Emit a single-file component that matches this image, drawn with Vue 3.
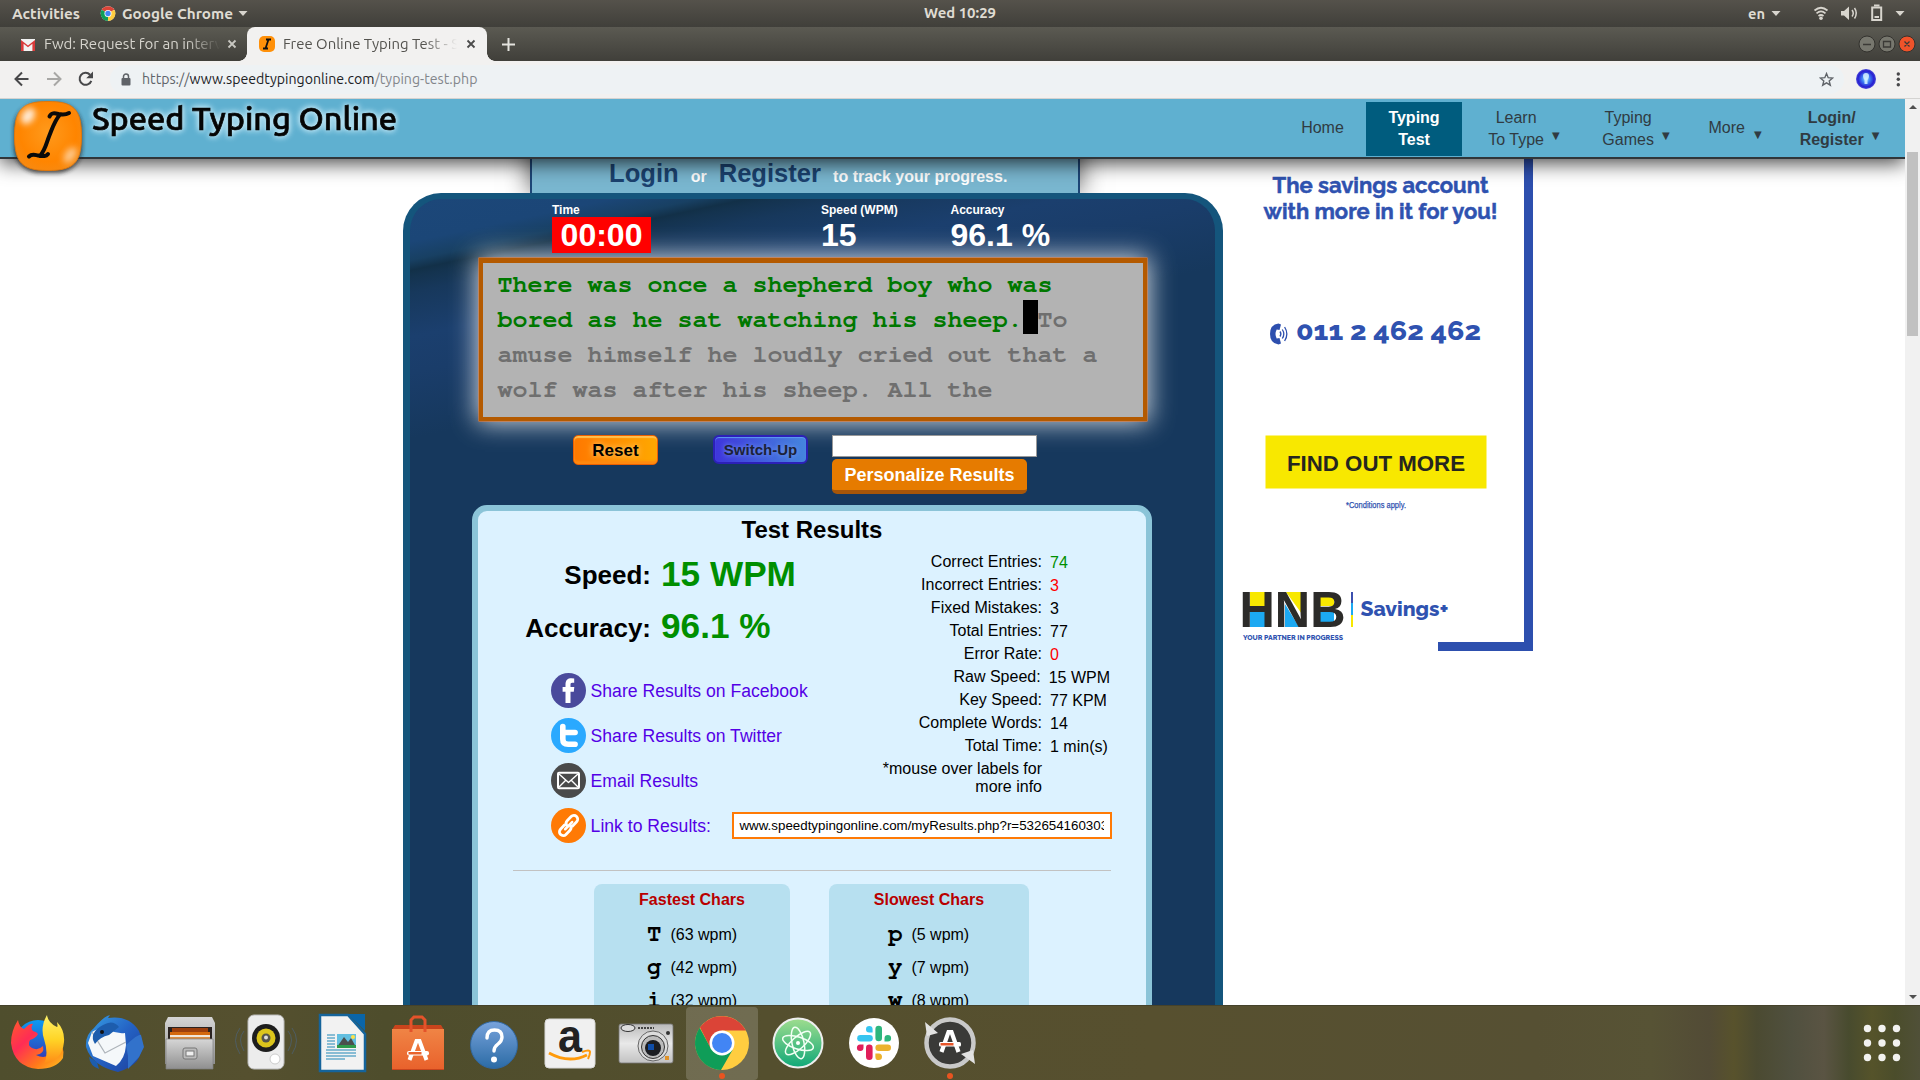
<script setup>
const stats = [
  { label: 'Correct Entries:', value: '74', tone: 'good' },
  { label: 'Incorrect Entries:', value: '3', tone: 'bad' },
  { label: 'Fixed Mistakes:', value: '3' },
  { label: 'Total Entries:', value: '77' },
  { label: 'Error Rate:', value: '0', tone: 'bad' },
  { label: 'Raw Speed:', value: '15 WPM' },
  { label: 'Key Speed:', value: '77 KPM' },
  { label: 'Complete Words:', value: '14' },
  { label: 'Total Time:', value: '1 min(s)' },
]
const fastest = [['T', '(63 wpm)'], ['g', '(42 wpm)'], ['i', '(32 wpm)']]
const slowest = [['p', '(5 wpm)'], ['y', '(7 wpm)'], ['w', '(8 wpm)']]
const resultUrl = 'www.speedtypingonline.com/myResults.php?r=53265416030335'
</script>

<template>
  <div class="screen">
    <!-- desktop bar -->
    <div class="topbar">
      <svg width="260" height="27" class="ui">
        <text x="12" y="18.500" font-weight="600" textLength="68" lengthAdjust="spacingAndGlyphs">Activities</text>
        <g transform="translate(108 13.500) scale(.27)">
          <circle r="27" fill="#fff" />
          <path d="M0 0 L-23.400-13.500 A27 27 0 0 1 23.400-13.500 Z" fill="#db4437" />
          <path d="M0 0 L-23.400-13.500 A27 27 0 0 0 0 27 Z" fill="#0f9d58" />
          <path d="M0 0 L23.400-13.500 A27 27 0 0 1 0 27 Z" fill="#ffcd40" />
          <circle r="13" fill="#fff" /><circle r="10" fill="#4285f4" />
        </g>
        <text x="122" y="18.500" font-weight="600" textLength="111" lengthAdjust="spacingAndGlyphs">Google Chrome</text>
        <path d="M238.500 11h9l-4.500 5z" fill="#d8d5ce" />
      </svg>
      <svg width="80" height="27" class="ui">
        <text x="4" y="18" font-weight="600" textLength="72" lengthAdjust="spacingAndGlyphs">Wed 10:29</text>
      </svg>
      <svg width="260" height="27" class="ui" viewBox="1660 0 260 27">
        <text x="1748" y="18.500" font-weight="600" textLength="17" lengthAdjust="spacingAndGlyphs">en</text>
        <path d="M1771.500 11h9l-4.500 5z M1895.500 11h9l-4.500 5z" fill="#d8d5ce" />
        <g fill="none" stroke="#d8d5ce" stroke-width="1.700">
          <path d="M1814.500 10.500q6.500-5.500 13 0M1816.500 13.300q4.500-3.800 9 0M1818.500 16q2.500-2 5 0" />
          <path d="M1852 10q2.500 3.200 0 6.500M1854.500 8q3.500 5 0 10.500" stroke-width="1.500" />
          <path d="M1872.200 7.500h9v12.500h-9z" stroke-width="2" />
        </g>
        <circle cx="1821" cy="18.300" r="1.800" fill="#d8d5ce" />
        <path d="M1841 11h3l5-4.500v13.500l-5-4.500h-3z M1874 4.500h5.500v2h-5.500z M1874.500 16h4.500v2h-4.500z" fill="#d8d5ce" />
      </svg>
    </div>

    <!-- browser tabs -->
    <div class="tabs">
      <div class="tab">
        <svg class="fav" width="14" height="12" viewBox="0 0 14 12">
          <path d="M0 0h14v12H0z" fill="#f2f2f2" />
          <path d="M0 12V1l7 5.500L14 1v11h-2.600V4.800L7 8.300 2.600 4.800V12z" fill="#d93a3a" />
        </svg>
        <svg width="178" height="34" class="ui tabtext fade">
          <text x="0" y="22" textLength="178" lengthAdjust="spacingAndGlyphs">Fwd: Request for an interv</text>
        </svg>
        <svg width="10" height="10" class="close"><path d="M1.500 1.500l7 7M8.500 1.500l-7 7" stroke="#c9c8c2" stroke-width="1.800" /></svg>
      </div>
      <div class="tab active">
        <svg width="16" height="16" viewBox="0 0 16 16">
          <rect width="16" height="16" rx="5" fill="#ff9009" />
          <path d="M7 3.500h5M4 12.500h5M9.500 3.500l-3 9" stroke="#111" stroke-width="1.800" fill="none" />
        </svg>
        <svg width="176" height="34" class="ui tabtext fade">
          <text x="0" y="22" textLength="176" lengthAdjust="spacingAndGlyphs">Free Online Typing Test - S</text>
        </svg>
        <svg width="10" height="10" class="close"><path d="M1.500 1.500l7 7M8.500 1.500l-7 7" stroke="#4b4b4b" stroke-width="1.800" /></svg>
      </div>
      <svg class="plus" width="13" height="13"><path d="M6.500 0v13M0 6.500h13" stroke="#e4e3de" stroke-width="2" /></svg>
      <svg class="winctl" width="60" height="20" viewBox="1857 34 60 20">
        <g stroke="#33322e"><circle cx="1867" cy="44" r="8" fill="#77776e" /><circle cx="1887" cy="44" r="8" fill="#77776e" /><circle cx="1907" cy="44" r="8" fill="#f0532a" /></g>
        <path d="M1863 44.500h8M1883.500 41.500h7v5.500h-7zM1904.500 41.500l5 5M1909.500 41.500l-5 5" stroke="#3b3a36" stroke-width="1.300" fill="none" />
      </svg>
    </div>

    <!-- address bar -->
    <div class="toolbar">
      <svg class="nav-ic" width="94" height="37" viewBox="0 61 94 37" fill="none" stroke-width="2">
        <path d="M28.500 79H16M22 72.500l-6.500 6.500L22 85.500" stroke="#48484a" />
        <path d="M47 79h13M54 72.500l6.500 6.500L54 85.500" stroke="#a8a7a5" />
        <path d="M91.300 80.800A6 6 0 1 1 90 74.700" stroke="#48484a" /><path d="M93 71.500v6.800h-6.800z" fill="#48484a" />
      </svg>
      <div class="omnibox">
        <svg width="10" height="13" viewBox="0 0 10 13"><rect x=".5" y="5" width="9" height="7.500" rx="1" fill="#5f6368" /><path d="M2.500 5.500V3.500a2.500 2.500 0 0 1 5 0v2" fill="none" stroke="#5f6368" stroke-width="1.500" /></svg>
        <svg width="345" height="29" class="ui url">
          <text x="0" y="19" textLength="335.500" lengthAdjust="spacingAndGlyphs"><tspan fill="#60646a">https://</tspan><tspan fill="#202124">www.speedtypingonline.com</tspan><tspan fill="#83868b">/typing-test.php</tspan></text>
        </svg>
        <svg class="star" width="15" height="15" viewBox="0 0 24 24"><path d="M12 2.500l2.700 6.600 7.100.5-5.500 4.600 1.800 6.900-6.100-3.800-6.100 3.800 1.800-6.900-5.500-4.600 7.100-.5z" fill="none" stroke="#5f6368" stroke-width="2.200" /></svg>
      </div>
      <svg class="ext" width="60" height="37" viewBox="1850 61 60 37">
        <defs><radialGradient id="bulb"><stop offset="0" stop-color="#9de6ff" /><stop offset=".4" stop-color="#3d7df5" /><stop offset=".8" stop-color="#281ed0" /><stop offset="1" stop-color="#4b4bd8" /></radialGradient></defs>
        <circle cx="1866" cy="79" r="10" fill="url(#bulb)" />
        <path d="M1863 76a3 3 0 0 1 6 0q0 2-1.500 4v4h-3v-4q-1.500-2-1.500-4z" fill="#d8f3ff" opacity=".85" />
        <g fill="#48484a"><circle cx="1898.300" cy="74" r="1.700" /><circle cx="1898.300" cy="79.300" r="1.700" /><circle cx="1898.300" cy="84.700" r="1.700" /></g>
      </svg>
    </div>

    <!-- web page -->
    <div class="viewport">
      <div class="page">
        <header class="site-head">
          <svg class="logo" width="400" height="84" viewBox="0 99 400 84">
            <defs>
              <radialGradient id="lg" cx=".5" cy=".45" r=".6"><stop offset="0" stop-color="#ff9a1c" /><stop offset=".7" stop-color="#ff8500" /><stop offset="1" stop-color="#f78a12" /></radialGradient>
              <filter id="bl" x="-50%" y="-50%" width="200%" height="200%"><feGaussianBlur stdDeviation="3" /></filter>
              <filter id="sh" x="-20%" y="-20%" width="140%" height="150%"><feGaussianBlur stdDeviation="2" /></filter>
            </defs>
            <rect x="14" y="103" width="68" height="70" rx="25" fill="#222" opacity=".8" filter="url(#sh)" />
            <path d="M48 101.500c25 0 33.500 7 33.500 34.500s-8.500 34.500-33.500 34.500S14.500 163.500 14.500 136 23 101.500 48 101.500z" fill="url(#lg)" stroke="#e0780c" stroke-width="1" />
            <ellipse cx="28" cy="116" rx="6" ry="9" transform="rotate(35 28 116)" fill="#fff" opacity=".85" filter="url(#bl)" />
            <ellipse cx="70" cy="155" rx="5" ry="9" transform="rotate(35 70 155)" fill="#ffe6c8" opacity=".7" filter="url(#bl)" />
            <path d="M49.500 116.500c2-4 5-3.500 9-2.500 5 1 7 1 10.500-1M29 156.500c3-3 6-1.500 9-1 6 1 8 1 10-1.500M60 114.500c-6 7-8 15-11 22-3 8-4 14-9 19.500" fill="none" stroke="#0a0a0a" stroke-width="4" stroke-linecap="round" />
            <text x="92" y="130" textLength="305" lengthAdjust="spacingAndGlyphs" class="brand">Speed Typing Online</text>
          </svg>
          <nav class="menu">
            <a class="mi home">Home</a>
            <a class="mi on">Typing<br />Test</a>
            <a class="mi learn"><span>Learn<br />To Type</span><i>▼</i></a>
            <a class="mi games"><span>Typing<br />Games</span><i>▼</i></a>
            <a class="mi more"><span>More</span><i>▼</i></a>
            <a class="mi login"><span>Login/<br />Register</span><i>▼</i></a>
          </nav>
        </header>

        <div class="content">
          <main class="main">
            <div class="login-tab"><b>Login</b><span>or</span><b>Register</b><span>to track your progress.</span></div>
            <section class="panel">
              <div class="meters">
                <div class="meter time"><label>Time</label><strong>00:00</strong></div>
                <div class="meter wpm"><label>Speed (WPM)</label><strong>15</strong></div>
                <div class="meter"><label>Accuracy</label><strong>96.1 %</strong></div>
              </div>
              <div class="typing">
                <div class="done">There was once a shepherd boy who was</div>
                <div><span class="done">bored as he sat watching his sheep.</span><span class="caret">&nbsp;</span>To</div>
                <div>amuse himself he loudly cried out that a</div>
                <div>wolf was after his sheep. All the</div>
              </div>
              <div class="controls">
                <button class="reset">Reset</button>
                <button class="switch">Switch-Up</button>
                <div class="personal"><input type="text" /><button>Personalize Results</button></div>
              </div>

              <div class="results">
                <h2>Test Results</h2>
                <div class="cols">
                  <div class="left">
                    <div class="score"><span>Speed:</span><b>15 WPM</b></div>
                    <div class="score second"><span>Accuracy:</span><b>96.1 %</b></div>
                    <div class="share first">
                      <svg width="35" height="35" viewBox="0 0 35 35"><circle cx="17.500" cy="17.500" r="17.500" fill="#4a4a9c" /><path d="M14.500 30V18.700H11.600V14h2.900v-2.500c0-4.300 2.200-6.200 6-6.200l2.700.2v4.300h-2c-1.500 0-1.700.8-1.700 1.900V14h3.800l-.5 4.700h-3.300V30z" fill="#fff" /></svg>
                      <a>Share Results on Facebook</a>
                    </div>
                    <div class="share">
                      <svg width="35" height="35" viewBox="0 0 35 35"><circle cx="17.500" cy="17.500" r="17.500" fill="#2aa9ff" /><path d="M11.800 8.500V21q0 5.300 5.300 5.300h7M11.800 14.500h12.300" fill="none" stroke="#fff" stroke-width="5.600" stroke-linecap="round" stroke-linejoin="round" /></svg>
                      <a>Share Results on Twitter</a>
                    </div>
                    <div class="share">
                      <svg width="35" height="35" viewBox="0 0 35 35"><circle cx="17.500" cy="17.500" r="17.500" fill="#4a4a4a" /><g fill="none" stroke="#fff" stroke-width="1.700" stroke-linejoin="round"><rect x="7" y="9.700" width="21" height="15.500" rx="1" stroke-width="2" /><path d="M8 11l9.500 8.500L27 11M8 24l7-7M27 24l-7-7" stroke-width="1.400" /></g></svg>
                      <a>Email Results</a>
                    </div>
                  </div>
                  <div class="table">
                    <div v-for="s in stats" :key="s.label" class="row"><span>{{ s.label }}</span><em :class="s.tone">{{ s.value }}</em></div>
                    <p>*mouse over labels for<br />more info</p>
                  </div>
                </div>
                <div class="share link">
                  <svg width="35" height="35" viewBox="0 0 35 35"><circle cx="17.500" cy="17.500" r="17.500" fill="#ff7a05" /><g fill="none" stroke="#fff" stroke-width="2.800" transform="rotate(-46 17.500 17.500)"><path d="M15 14.300H9.300a3.800 3.800 0 0 0 0 7.600h5.800a3.800 3.800 0 0 0 3.600-2.800M20 20.800h5.800a3.800 3.800 0 0 0 0-7.600H20a3.800 3.800 0 0 0-3.600 2.800" stroke-linecap="round" /><path d="M12.500 17.700h10" stroke-width="2.600" stroke-linecap="round" /></g></svg>
                  <a>Link to Results:</a>
                  <div class="url-field"><div>{{ resultUrl }}</div></div>
                </div>
                <hr />
                <div class="chars">
                  <div class="box fast">
                    <h3>Fastest Chars</h3>
                    <div v-for="c in fastest" :key="c[0]" class="ch"><b>{{ c[0] }}</b><span>{{ c[1] }}</span></div>
                  </div>
                  <div class="box slow">
                    <h3>Slowest Chars</h3>
                    <div v-for="c in slowest" :key="c[0]" class="ch"><b>{{ c[0] }}</b><span>{{ c[1] }}</span></div>
                  </div>
                </div>
              </div>
            </section>
          </main>

          <aside class="ad">
            <svg width="300" height="552" viewBox="1233 99 300 552">
              <path d="M1524 99h9v552h-95v-9h86z" fill="#2d4fae" />
              <g fill="#2f52b0" class="adfont">
                <text x="1272.500" y="193" font-size="22" font-weight="700" textLength="216" lengthAdjust="spacingAndGlyphs" stroke="#2f52b0" stroke-width=".5">The savings account</text>
                <text x="1263.500" y="219" font-size="22" font-weight="700" textLength="234" lengthAdjust="spacingAndGlyphs" stroke="#2f52b0" stroke-width=".5">with more in it for you!</text>
                <text x="1296" y="340" font-size="26.500" font-weight="800" textLength="185" lengthAdjust="spacingAndGlyphs">011 2 462 462</text>
                <text x="1360.500" y="616" font-size="19.500" font-weight="800" textLength="88" lengthAdjust="spacingAndGlyphs">Savings+</text>
                <text x="1243" y="640" font-size="6.800" font-weight="800" textLength="100" lengthAdjust="spacingAndGlyphs">YOUR PARTNER IN PROGRESS</text>
                <text x="1346" y="508" font-size="9" textLength="60" lengthAdjust="spacingAndGlyphs" class="cond" stroke="#2f52b0" stroke-width=".25">*Conditions apply.</text>
              </g>
              <path d="M1278.500 323.500q-8.500 1-8.500 10.500t8.500 10.500l2.500-1-1.500-5.500-2.800.5q-2.400-4.500 0-9l2.800.5 1.500-5.500z" fill="#2d4fae" />
              <path d="M1280 331.500q1.800 2.500 0 5M1282.300 329.500q3 4.500 0 9M1284.600 327q4.500 7 0 14" fill="none" stroke="#2d4fae" stroke-width="1.300" />
              <rect x="1265.500" y="435.500" width="221" height="53" fill="#f8e800" />
              <text x="1287" y="470.800" textLength="178" lengthAdjust="spacingAndGlyphs" class="cta">FIND OUT MORE</text>
              <g fill="#f8e800"><path d="M1250 592h16v14h-16zM1286 592h16v22zM1320 597h14v9h-14z" /></g>
              <g fill="#1ca9f2"><path d="M1250 612h16v15h-16zM1285 604l14 23h-14zM1320 612h14v10h-14z" /></g>
              <text x="1239.500" y="627" textLength="106" lengthAdjust="spacingAndGlyphs" class="hnb">HNB</text>
              <path d="M1351 592h2v11h-2z" fill="#3b4fae" /><path d="M1351 603h2v12h-2z" fill="#1ca9f2" /><path d="M1351 615h2v12h-2z" fill="#f8e800" />
            </svg>
          </aside>
        </div>
      </div>
      <div class="scrollbar"><i class="up"></i><div class="thumb"></div><i class="down"></i></div>
    </div>

    <!-- dock -->
    <div class="dock">
      <div class="app">
        <svg viewBox="-38 -38 76 76">
          <defs>
            <linearGradient id="ff" x1="0" y1="0" x2="1" y2="1"><stop offset="0" stop-color="#ff5a2b" /><stop offset=".35" stop-color="#ff2c55" /><stop offset=".7" stop-color="#ff7a1a" /><stop offset="1" stop-color="#ffc41f" /></linearGradient>
            <linearGradient id="ff2" x1="0" y1="0" x2="0" y2="1"><stop offset="0" stop-color="#fff36a" /><stop offset=".5" stop-color="#ffd426" /><stop offset="1" stop-color="#ff8a16" /></linearGradient>
            <linearGradient id="ffb" x1="0" y1="0" x2="0" y2="1"><stop offset="0" stop-color="#0a9bf5" /><stop offset="1" stop-color="#3a2aa8" /></linearGradient>
          </defs>
          <circle r="23" cy="0" fill="url(#ffb)" />
          <path d="M-20-23q1 7 6 9 6-6 9-5-3 4 0 7 4 1 5 3-2 4-8 6-3 5 2 8 6 3 11-2 2 8-7 9 10 5 16-3 6-8 2-17 12 12 9 23-7 11-25 11-24-2-27-26 0-12 7-23z" fill="url(#ff)" />
          <path d="M9-28q-7 12-3 24 5 15 0 25 18-3 20-22 1-12-7-20 1 5 0 5-9-4-10-12z" fill="url(#ff2)" />
        </svg>
      </div>
      <div class="app">
        <svg viewBox="-38 -38 76 76">
          <defs><linearGradient id="tb" x1="0" y1="0" x2="1" y2="1"><stop offset="0" stop-color="#38a2e6" /><stop offset=".5" stop-color="#2462c4" /><stop offset="1" stop-color="#1d3f9c" /></linearGradient></defs>
          <path d="M-20-15Q-10-27-4-28L-6-25Q15-28 25-12 32 4 23 18 17 25 4 29q-26-6-32-25-1-12 8-19z" fill="url(#tb)" />
          <path d="M-26 0l4-11q9-6 17-2 8 4 16 3l1 12q-1 14-10 21l-23-10z" fill="#f5f8fa" />
          <path d="M-22-11l13 21L12-1" fill="none" stroke="#aeb4ba" stroke-width="1.300" />
          <path d="M-25 14q1 9 10 12l-2-7zM-11-18q10-6 16 2l-10 8q-9 2-14 9-7-11 8-19z" fill="#1d5dad" />
          <circle cx="-12" cy="-11" r="2" fill="#111" />
          <path d="M12 2q13-12 15-10l3 12-5 10-11 12 0-13z" fill="#3272cb" />
        </svg>
      </div>
      <div class="app">
        <svg viewBox="-38 -38 76 76">
          <defs><linearGradient id="cab" x1="0" y1="0" x2="0" y2="1"><stop offset="0" stop-color="#d6d6d6" /><stop offset="1" stop-color="#8f8f8f" /></linearGradient></defs>
          <path d="M-22-26h44l3 6v41h-50v-41z" fill="url(#cab)" />
          <path d="M-22-16h44v14h-44z" fill="#2a2220" />
          <path d="M-18-15h36v4h-36z" fill="#9c3f0d" /><path d="M-20-11h40v4h-40z" fill="#d4690f" /><path d="M-20-8h40v5h-40z" fill="#f0e6da" /><path d="M-20-6h40v5h-40z" fill="#d88d45" />
          <path d="M-24-4h47v30h-47z" fill="url(#cab)" stroke="#7e7e7e" stroke-width=".7" />
          <rect x="-7" y="5" width="14" height="11" rx="2" fill="#bbb" stroke="#777" /><rect x="-4" y="8" width="8" height="5" fill="#eee" stroke="#777" />
        </svg>
      </div>
      <div class="app">
        <svg viewBox="-38 -38 76 76">
          <g fill="none" stroke="#4b6378" opacity=".7"><path d="M-22-12q-7 8 0 20M-26-15q-9 12 0 26M22-12q7 8 0 20M26-15q9 12 0 26" /></g>
          <rect x="-18" y="-28" width="36" height="54" rx="6" fill="#ececec" stroke="#bbb" />
          <ellipse cy="-5" rx="14" ry="14" fill="#1d1d1d" /><circle cy="-5" r="9.500" fill="#dcc51c" /><circle cy="-5" r="4.500" fill="#55544a" /><circle cy="-5.500" r="2" fill="#ddd" />
          <circle cx="9" cy="16" r="5" fill="#fff" stroke="#ccc" />
        </svg>
      </div>
      <div class="app">
        <svg viewBox="-38 -38 76 76">
          <path d="M-22-28h28l17 19v37h-45z" fill="#f2f2f2" stroke="#15649b" stroke-width="2.500" />
          <path d="M6-29h17v17z" fill="#0a65a8" />
          <path d="M-15-8h8M-15-5h8M-15-2h8M-15 1h8M-15 4h8M-16 7h30M-16 10h30M-16 13h30M-16 16h19" stroke="#1e86b5" stroke-width="1.200" />
          <path d="M-5-9h19V5H-5z" fill="#63bfe0" /><path d="M-5 4l7-10 4 5 3-4 5 9z" fill="#4a4f4c" /><path d="M-5 2h19v3H-5z" fill="#2e9a4a" /><circle cx="11" cy="-6" r="2" fill="#ffe047" />
        </svg>
      </div>
      <div class="app">
        <svg viewBox="-38 -38 76 76">
          <defs><linearGradient id="bag" x1="0" y1="0" x2="0" y2="1"><stop offset="0" stop-color="#f08445" /><stop offset="1" stop-color="#e9622c" /></linearGradient></defs>
          <path d="M-23-18h46l3 5v40h-52v-40z" fill="#c9441c" /><path d="M-26-14h52v40h-52z" fill="url(#bag)" />
          <path d="M-7-11v-12l3-3h8l3 3v12" fill="none" stroke="#e4532a" stroke-width="3" />
          <path d="M-8.500 17L-1.500-2h3L8.500 17" fill="none" stroke="#fff" stroke-width="4" />
          <rect x="-11" y="8" width="22" height="4.500" rx="2" fill="#fff" /><rect x="-9.500" y="9" width="13" height="2.500" fill="#e9622c" />
        </svg>
      </div>
      <div class="app">
        <svg viewBox="-38 -38 76 76">
          <defs><linearGradient id="hp" x1="0" y1="0" x2="0" y2="1"><stop offset="0" stop-color="#78a3dc" /><stop offset="1" stop-color="#2b6ba5" /></linearGradient></defs>
          <circle cy="2" r="23.500" fill="url(#hp)" stroke="#3268a0" />
          <path d="M-7-5q0-8 7.500-8t7.500 7q0 4-4 7-4 3-4 7" fill="none" stroke="#fff" stroke-width="3.400" stroke-linecap="round" /><circle cy="16.500" r="3" fill="#fff" />
        </svg>
      </div>
      <div class="app">
        <svg viewBox="-38 -38 76 76">
          <rect x="-25" y="-24" width="50" height="49" rx="4" fill="#f0f0f0" stroke="#d8d8d8" />
          <text x="-12" y="9" class="amz" textLength="24" lengthAdjust="spacingAndGlyphs">a</text>
          <path d="M-21 10q20 11 38 2" fill="none" stroke="#ff9a0a" stroke-width="3" /><path d="M12 9q8-3 8 0t-2 7" fill="none" stroke="#ff9a0a" stroke-width="2" />
        </svg>
      </div>
      <div class="app">
        <svg viewBox="-38 -38 76 76">
          <defs><linearGradient id="cam" x1="0" y1="0" x2="0" y2="1"><stop offset="0" stop-color="#b9b9b9" /><stop offset=".5" stop-color="#e9e9e9" /><stop offset="1" stop-color="#c2c2c2" /></linearGradient></defs>
          <rect x="-27" y="-19" width="54" height="39" rx="2" fill="url(#cam)" stroke="#777" stroke-width=".8" />
          <ellipse cx="-18" cy="-15" rx="7" ry="3.500" fill="#ddd" stroke="#333" /><path d="M-8-15h16" stroke="#444" stroke-width="2" stroke-dasharray="2 1" />
          <circle cx="7" cy="3" r="15" fill="#ddd" stroke="#666" /><circle cx="7" cy="4" r="11.500" fill="#bbb" stroke="#333" /><circle cx="7" cy="5" r="8" fill="#1b1d22" /><path d="M2 1h6v6H2z" fill="#0f4da8" />
          <circle cx="22" cy="-10" r="2" fill="#333" /><rect x="19" y="13" width="4" height="4" fill="#e0932b" />
        </svg>
      </div>
      <div class="app sel">
        <svg viewBox="-38 -38 76 76">
          <circle r="27" fill="#ffcd40" />
          <path d="M-22-15.600A27 27 0 0 1 23.800-12.500H0L-11 6z" fill="#db4437" />
          <path d="M-22.300-15.200A27 27 0 0 0-1 27L10.500 7-10.800 6.200z" fill="#0f9d58" />
          <circle r="12.500" fill="#fff" /><circle r="10" fill="#4285f4" />
        </svg>
        <i class="run"></i>
      </div>
      <div class="app">
        <svg viewBox="-38 -38 76 76">
          <defs><linearGradient id="at" x1="0" y1="0" x2="0" y2="1"><stop offset="0" stop-color="#9fdd8e" /><stop offset="1" stop-color="#10a878" /></linearGradient></defs>
          <circle r="24.500" fill="url(#at)" stroke="#eee" stroke-width="2" />
          <g fill="none" stroke="#f2fff4" stroke-width="1.500"><ellipse rx="16" ry="6" transform="rotate(18)" /><ellipse rx="16" ry="6" transform="rotate(78)" /><ellipse rx="16" ry="6" transform="rotate(-42)" /></g><circle r="2" fill="#fff" />
        </svg>
      </div>
      <div class="app">
        <svg viewBox="-38 -38 76 76">
          <circle r="25" fill="#fff" />
          <g stroke-width="6.600" stroke-linecap="round"><path d="M-13.500-4.800h9" stroke="#36c5f0" /><path d="M4.700-14v9" stroke="#2eb67d" /><path d="M4.700 4.700h9" stroke="#ecb22e" /><path d="M-4.700 4.700v9" stroke="#e01e5a" /></g>
          <g><path d="M-1.400-10.500h-3.400a3.300 3.300 0 1 1 3.400-3.400z" fill="#36c5f0" /><path d="M10.500-1.400v-3.400a3.300 3.300 0 1 1 3.400 3.400z" fill="#2eb67d" /><path d="M1.400 10.500h3.400a3.300 3.300 0 1 1-3.400 3.400z" fill="#ecb22e" /><path d="M-10.500 1.400v3.400a3.300 3.300 0 1 1-3.400-3.400z" fill="#e01e5a" /></g>
        </svg>
      </div>
      <div class="app">
        <svg viewBox="-38 -38 76 76">
          <circle r="22.500" fill="#3a3a38" /><circle r="23.500" fill="none" stroke="#c9c9c9" stroke-width="4.500" />
          <path d="M-25-21l2 14 11-3zM25 21l-2-14-12 4z" fill="#e2e2e2" />
          <path d="M-8.500 9L-1.500-11h3L8.500 9" fill="none" stroke="#fff" stroke-width="4.200" /><rect x="-11" y="-1" width="22" height="4.500" rx="1.500" fill="#fff" /><rect x="-9.500" y="0" width="13" height="2.500" fill="#e8562a" />
        </svg>
        <i class="run"></i>
      </div>
      <svg class="grid" width="40" height="40"><g fill="#f2f2f0"><template v-for="r in 3" :key="r"><circle v-for="c in 3" :key="c" :cx="c * 14.500 - 9" :cy="r * 14.500 - 9" r="3.700" /></template></g></svg>
    </div>
  </div>
</template>

<style>
html, body { margin: 0; background: #fff; overflow: hidden; }
</style>

<style scoped>
* { box-sizing: border-box; }
.screen { width: 1920px; height: 1080px; display: flex; flex-direction: column; overflow: hidden; font-family: "Liberation Sans", Arial, sans-serif; background: #fff; }
svg { display: block; flex: none; }
.ui { font-family: Ubuntu, "Noto Sans", sans-serif; font-size: 14px; fill: #dfdbd2; }

.topbar { height: 27px; flex: none; display: flex; justify-content: space-between; background: linear-gradient(#55524b, #403f3a); }
.tabs { height: 34px; flex: none; display: flex; align-items: center; background: linear-gradient(#5b5a52, #403f3a); }
.tab { width: 247px; height: 34px; display: flex; align-items: center; padding-left: 21px; }
.tab .fav { margin-right: 9px; margin-top: 1px; }
.tabtext { fill: #d6d4cd; font-size: 14.500px; }
.tab .close { margin-left: 5px; }
.tab.active { position: relative; width: 240px; padding-left: 12px; background: #f2f1f0; border-radius: 8px 8px 0 0; }
.tab.active::before, .tab.active::after { content: ""; position: absolute; bottom: 0; width: 8px; height: 8px; }
.tab.active::before { left: -8px; background: radial-gradient(circle at 0 0, transparent 7.500px, #f2f1f0 8px); }
.tab.active::after { right: -8px; background: radial-gradient(circle at 100% 0, transparent 7.500px, #f2f1f0 8px); }
.tab.active .tabtext { fill: #54534f; margin-left: 8px; }
.tab.active .close { margin-left: 7px; }
.fade { -webkit-mask-image: linear-gradient(90deg, #000 80%, transparent 99%); mask-image: linear-gradient(90deg, #000 80%, transparent 99%); }
.plus { margin-left: 15px; }
.winctl { margin-left: auto; margin-right: 3px; }

.toolbar { height: 38px; flex: none; display: flex; align-items: flex-start; background: #f2f1f0; border-bottom: 1px solid #d4d3d1; }
.omnibox { width: 1734px; height: 29px; margin: 4px 0 0 16px; border-radius: 15px; background: #eef2f4; display: flex; align-items: center; padding-left: 11px; }
.url { margin-left: 11px; font-size: 15px; }
.star { margin-left: auto; margin-right: 10px; }
.ext { margin-left: 6px; }

.viewport { height: 906px; flex: none; display: flex; overflow: hidden; }
.page { position: relative; width: 1905px; height: 906px; overflow: hidden; }
.site-head { position: absolute; z-index: 3; inset: 0 0 auto 0; height: 60px; display: flex; justify-content: space-between; background: #5fb0d0; border-bottom: 2px solid #30363a; box-shadow: 0 4px 20px rgba(0, 0, 0, .75); }
.brand { font-family: "Ubuntu", "Noto Sans", sans-serif; font-size: 31.500px; font-weight: 500; fill: #050505; stroke: #050505; stroke-width: .7; filter: drop-shadow(0 0 3px #cfeefa) drop-shadow(0 0 2px #a8daee); }
.menu { display: flex; align-items: flex-start; height: 58px; padding-right: 30px; font-size: 16px; line-height: 22px; color: #303b42; text-align: center; }
.mi { height: 54px; margin-top: 3px; display: flex; align-items: center; justify-content: center; }
.mi i { font: normal 10px/12px "DejaVu Sans", sans-serif; align-self: flex-end; margin-bottom: 14px; }
.mi.home { width: 43px; margin-right: 22px; margin-top: 2px; }
.mi.on { width: 96px; margin-right: 25px; background: #005c7e; color: #fff; font-weight: bold; }
.mi.learn { width: 74px; gap: 8px; margin-right: 41px; }
.mi.games { width: 68px; gap: 8px; margin-right: 38px; }
.mi.more { width: 54px; gap: 9px; margin-right: 37px; margin-top: 2px; }
.mi.more i { margin-bottom: 14px; }
.mi.login { width: 81px; gap: 8px; font-weight: bold; margin-right: -5px; }

.content { display: flex; align-items: flex-start; }
.main { width: 820px; margin-left: 403px; }
.login-tab { width: 550px; height: 94px; margin-left: 127px; padding: 60px 0 0 77px; border: 2px solid #1d4677; border-width: 0 2px; background: #79b6cf; box-shadow: 0 0 24px rgba(0, 0, 0, .65); display: flex; align-items: baseline; color: #fff; font-weight: bold; font-size: 16px; line-height: 28px; white-space: nowrap; }
.login-tab b { font-size: 25.600px; color: #1b426f; }
.login-tab span { margin: 0 12px; }
.panel { position: relative; height: 812px; border: solid #14557c; border-width: 6px 8px 0 7px; border-radius: 38px 38px 0 0; background: linear-gradient(168deg, #1c4779 0, #1b4677 42px, #184063 60px, #123048 70px, #14334f 76px, #17385c 92px, #1b3f6e 135px, #1a3d6a 170px, #16385d 235px); padding-top: 4px; }
.meters { display: flex; padding-left: 142px; color: #fff; font-weight: bold; }
.meter label { display: block; font-size: 12px; line-height: 15px; height: 14px; white-space: nowrap; }
.meter strong { display: block; font-size: 32px; line-height: 36px; white-space: nowrap; }
.meter.time { width: 269px; }
.meter.time strong { width: 99px; background: #f00; text-align: center; }
.meter.wpm { width: 129.500px; }
.typing { margin: 5px 0 0 69px; width: 668px; height: 163px; border: 4px solid #b45a00; border-top-width: 5px; padding: 4px 0 0 14.500px; background: #b3b3b3; box-shadow: 0 0 0 .5px #ff7a20, 0 0 24px 2px rgba(255, 255, 255, .8); color: #6f6f6f; font: bold 25px/35px "Courier 10 Pitch", "Nimbus Mono PS", "FreeMono", "Liberation Mono", monospace; white-space: pre; }
.typing .done { color: #007800; }
.caret { display: inline-block; width: 15px; height: 34px; vertical-align: top; margin-top: -2px; background: #000; }
.controls { display: flex; align-items: flex-start; padding: 14px 0 0 163px; height: 84px; }
button { padding: 0; border: 0; font-family: inherit; font-weight: bold; white-space: nowrap; }
.reset { width: 85px; height: 30px; border: 1px solid #ec5f00; border-radius: 5px; background: linear-gradient(90deg, #ff7800, #ffa800); box-shadow: inset 0 2px 1px #ffc050, inset 0 -3px 2px #ff8a10; font-size: 17px; line-height: 27px; color: #000; text-shadow: 0 0 6px #ffd98a; }
.switch { width: 95px; height: 29px; margin: 0 0 0 55px; border: 2px solid #2c20b8; border-radius: 6px; background: linear-gradient(90deg, #3f35dc, #4585dd); box-shadow: inset 0 1px 1px #5d9df0; font-size: 15px; color: #1c2238; text-shadow: 0 0 5px #7aa0f0; }
.personal { margin-left: 24px; display: flex; flex-direction: column; gap: 2px; align-items: flex-start; }
.personal input { width: 205px; height: 22px; border: 1px solid #999; background: #fff; padding: 0; }
.personal button { width: 195px; height: 35px; padding-top: 1px; border-radius: 5px; background: #e67b00; border-bottom: 4px solid #a75608; font-size: 18px; color: #fff; }

.results { margin-left: 62px; width: 680px; height: 520px; border: 6px solid #8bc4d8; border-radius: 15px 15px 0 0; background: #dcf2ff; padding-top: 4px; color: #000; }
h2 { margin: 0; font-size: 24px; line-height: 30px; text-align: center; }
.cols { display: flex; margin-top: 3px; height: 255px; }
.left { width: 370px; }
.score { display: flex; height: 52px; line-height: 52px; font-weight: bold; white-space: nowrap; }
.score span { width: 173px; text-align: right; font-size: 26px; padding-top: 1px; }
.score b { margin-left: 10px; font-size: 35.200px; color: #008f00; }
.score.second span { padding-top: 2px; }
.share { display: flex; align-items: center; height: 45px; padding-left: 73px; font-size: 17.600px; color: #5400e6; white-space: nowrap; }
.share.first { margin-top: 16px; }
.share a { margin-left: 4.600px; padding-top: 2px; }
.share.link a { width: 141.400px; }
.url-field { width: 380px; height: 27px; border: 2px solid #ff7a05; background: #fff; padding: 0 6px 0 5.500px; }
.url-field div { overflow: hidden; font-size: 13.333px; line-height: 23px; color: #000; }
.table { width: 262px; padding-top: 2px; font-size: 16px; }
.row { display: flex; height: 23px; line-height: 23px; white-space: nowrap; }
.row span { width: 194px; text-align: right; }
.row em { margin-left: 8px; font-style: normal; position: relative; top: 1px; }
.good { color: #008f00; }
.bad { color: #f00; }
.table p { margin: 3px 0 0; width: 194px; line-height: 18px; text-align: right; }
hr { width: 598px; height: 1px; margin: 22px 0 13px 35px; border: 0; background: #c2c2c2; }
.chars { display: flex; gap: 39px; padding-left: 116px; }
.box { height: 160px; border-radius: 8px 8px 0 0; background: #b7e0f0; }
.box.fast { width: 196px; }
.box.slow { width: 200px; }
h3 { margin: 0 0 3px; font-size: 16px; line-height: 31px; text-align: center; color: #b90000; }
.ch { display: flex; height: 33px; line-height: 33px; font-size: 16px; padding-left: 53px; gap: 9px; }
.slow .ch { padding-left: 59px; }
.ch b { font: bold 24px/32px "Courier 10 Pitch", "Nimbus Mono PS", "FreeMono", "Liberation Mono", monospace; }

.ad { margin-left: 10px; }
.adfont { font-family: Raleway, Lato, "Open Sans", sans-serif; }
.cond { font-family: "Liberation Sans", sans-serif; }
.cta { font: bold 22.500px "Liberation Sans", sans-serif; fill: #26261f; }
.hnb { font: bold 50.500px "Liberation Sans", sans-serif; fill: #2c2b29; }

.scrollbar { width: 15px; height: 906px; background: #f1f1f1; display: flex; flex-direction: column; align-items: center; }
.scrollbar i { width: 0; height: 0; border: 4px solid transparent; }
.up { border-top-width: 0 !important; border-bottom-color: #505050 !important; margin-top: 6px; }
.thumb { width: 11px; height: 184px; margin-top: 43px; background: #c1c1c1; }
.down { border-bottom-width: 0 !important; border-top-color: #505050 !important; margin: auto 0 6px; }

.dock { height: 75px; flex: none; display: flex; align-items: flex-start; border-top: 1px solid #45422b; background: linear-gradient(90deg, #4f4e2d 0, #55502f 13%, #4e4d2c 20%, #544f2e 40%, #57502f 60%, #565033 80%, #575335 86%, #524b36 89%, #58522c 90.300%, #4b4a31 91.500%, #50503f 93.300%, #5a5443 95%, #484b2e 96.300%, #55532a 97.500%, #4b4d2b 98.700%, #505038 100%); }
.app { position: relative; width: 76px; height: 75px; }
.app svg { width: 76px; height: 76px; margin-top: -1px; }
.amz { font: bold 46px "Liberation Sans", sans-serif; fill: #222; }
.app.sel::before { content: ""; position: absolute; inset: 1px 2px 1px 2px; border-radius: 4px; background: rgba(255, 255, 255, .17); }
.app.sel svg { position: relative; }
.run { position: absolute; left: 35px; bottom: 2px; width: 6px; height: 6px; border-radius: 50%; background: #e95420; }
.grid { margin: 17px 18px 0 auto; }
</style>
